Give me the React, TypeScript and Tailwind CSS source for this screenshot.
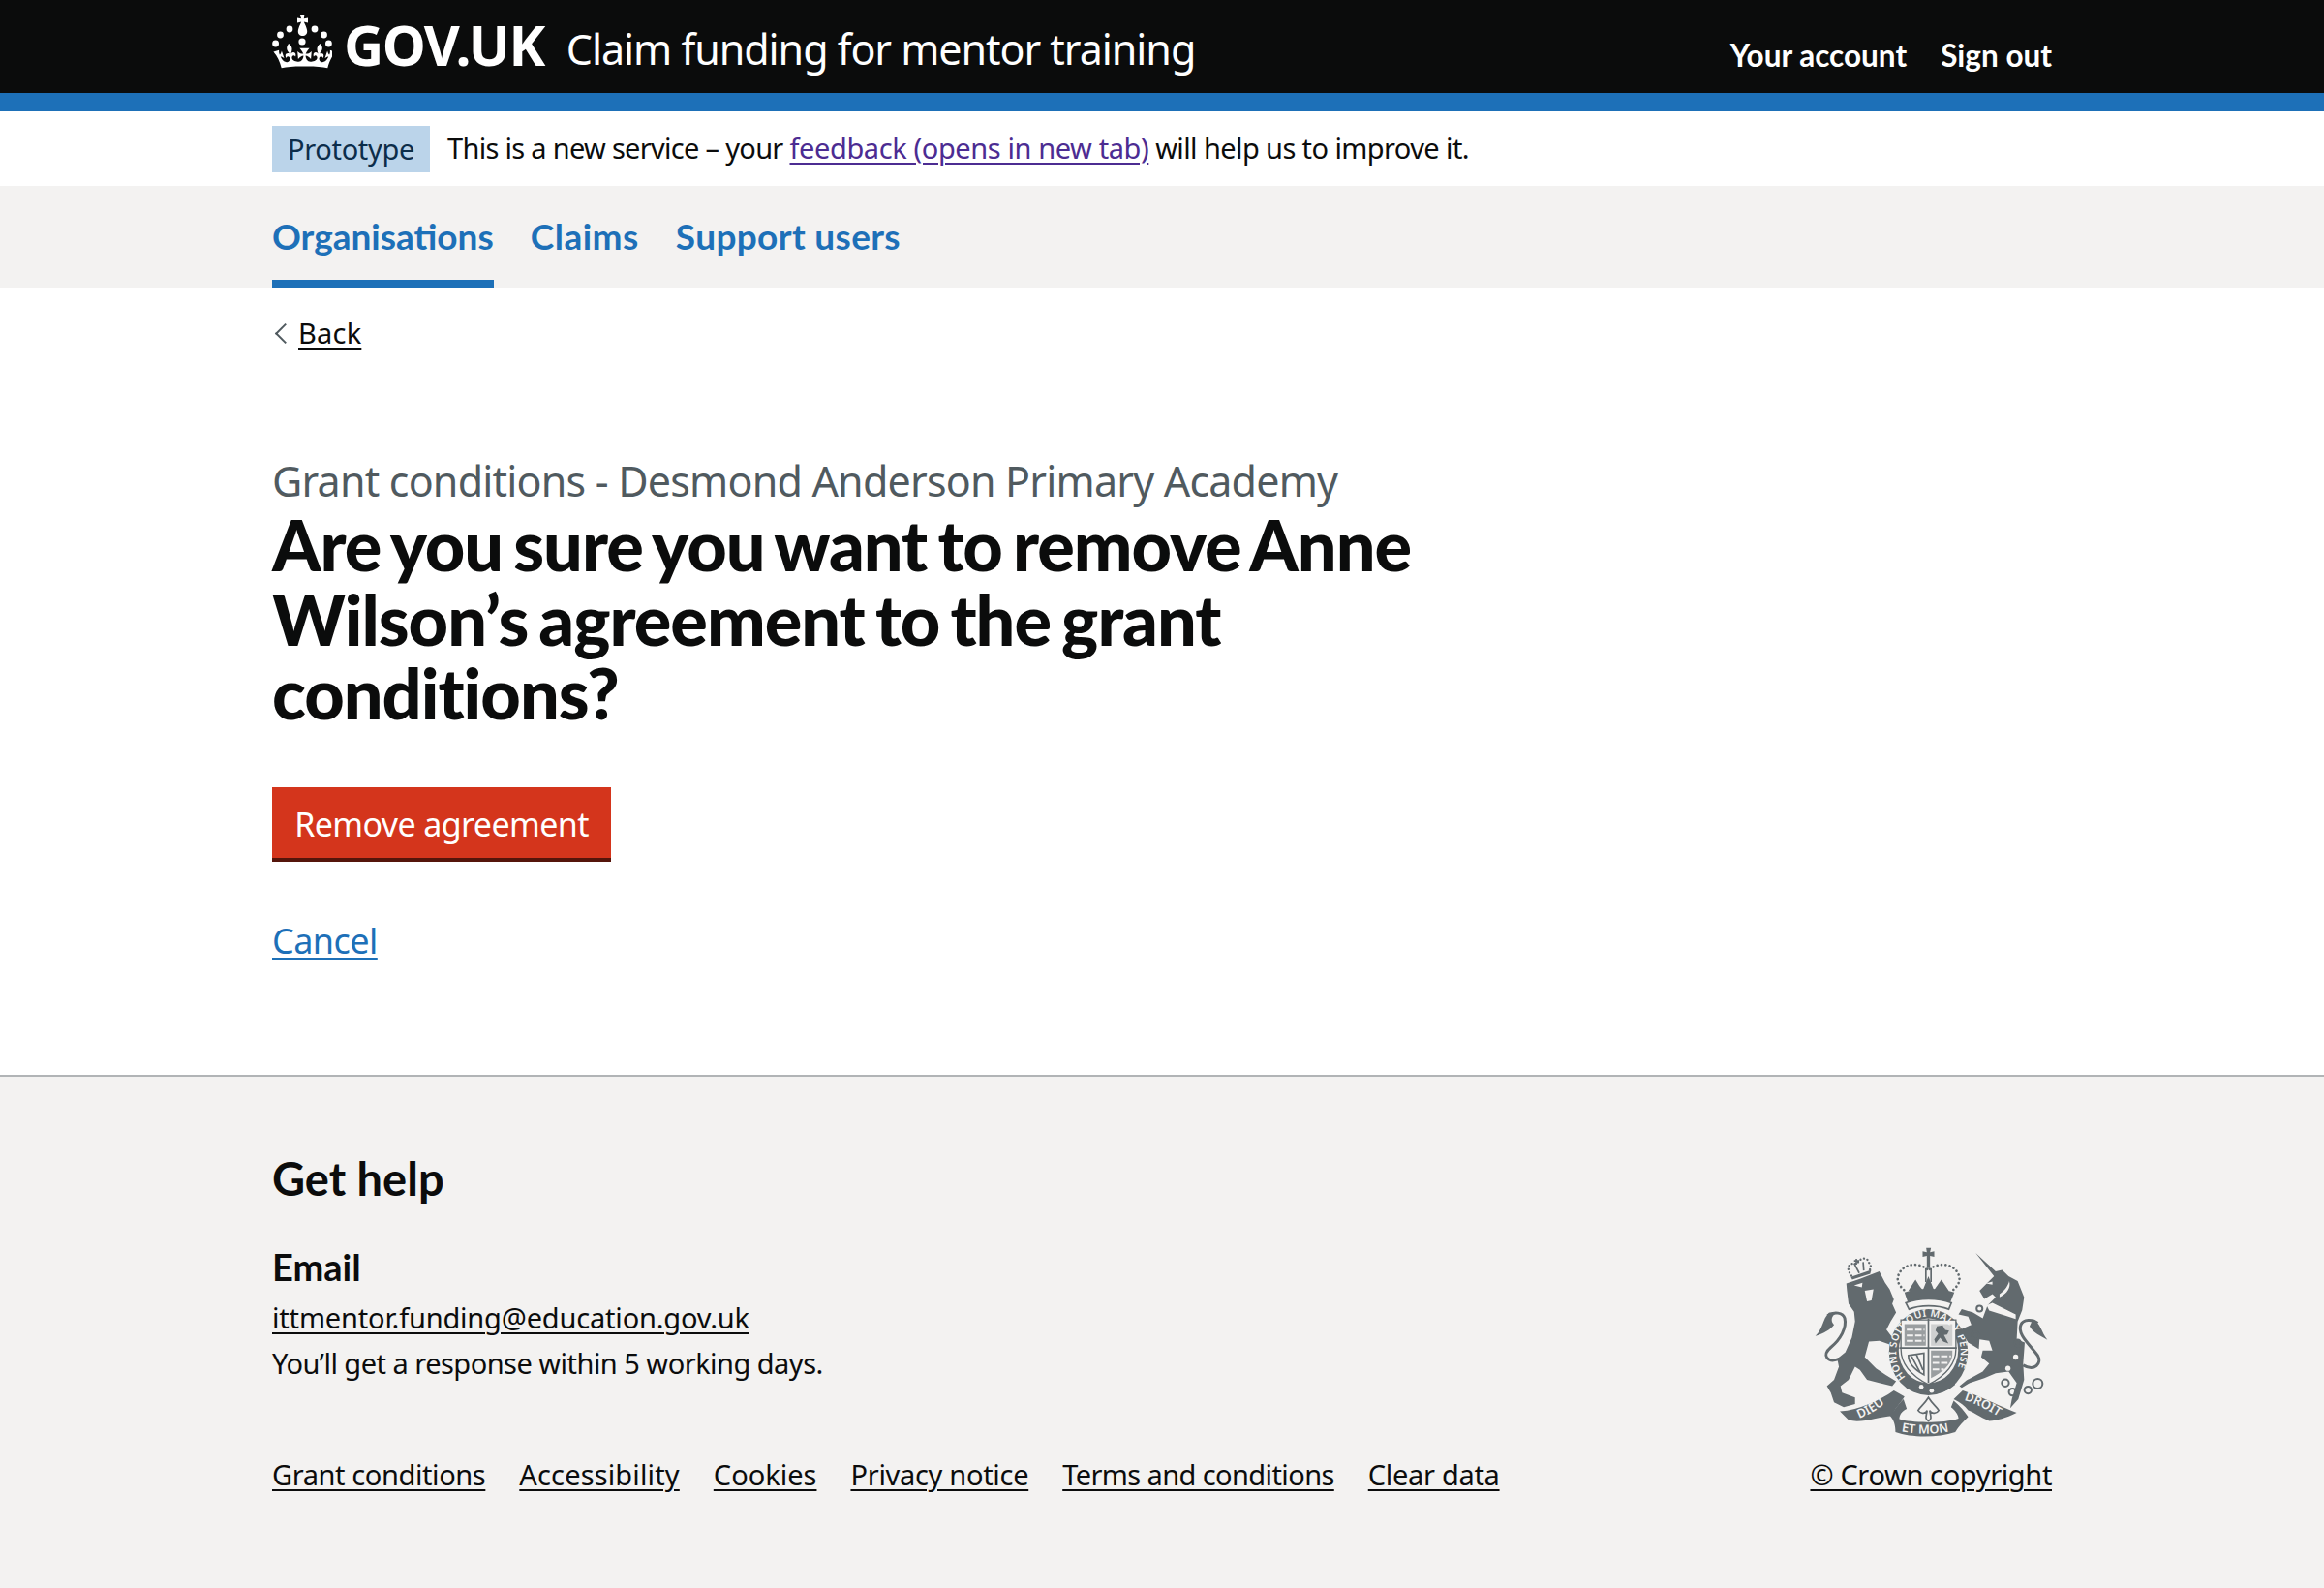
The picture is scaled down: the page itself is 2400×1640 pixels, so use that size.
const font = { fontFamily: '"Noto Sans", sans-serif' };
const bold = { fontFamily: 'Lato, sans-serif' };

function Crown() {
  return (
    <svg viewBox="0 0 62 58" className="h-[58px] w-[62px] shrink-0" fill="#fff" aria-hidden="true">
      <path d="M28.5 1h5l-.7 4.200 4.200-.8v5l-4.200-.8 1 2.200c1.600 3.200 2.400 6 2.400 7.600 0 2.800-2.200 4.600-4.700 4.600s-4.700-1.800-4.700-4.600c0-1.600.8-4.400 2.400-7.600l1-2.200-4.200.8v-5l4.200.8z" />
      <circle cx="18" cy="16" r="3.4" />
      <circle cx="44" cy="16" r="3.4" />
      <circle cx="8.5" cy="22" r="3.4" />
      <circle cx="53.5" cy="22" r="3.4" />
      <circle cx="3.6" cy="31" r="3.4" />
      <circle cx="58.4" cy="31" r="3.4" />
      <circle cx="31" cy="29" r="3.6" />
      <path d="M31 54.500c-9.200 0-15.800.6-21.300 1.700C8 49.500 5.400 44 1.400 39.500l5.800-1.800c-.3 2.300 0 3.600.7 4.900.8-.8 1.500-2.200 2-4.200l2.600 7.800c-1.300-1-2.400-1.600-3.700-1.600 2.200 4.700 5 6 6.800 5.600 2.100-.4 3.100-2.300 2.800-4-.5-2.300-2.900-3-4-.3-2.200-4.400 1.500-5.700 3.800-4.400-3.600-3.600-4-6.800-1.100-10.500 4.100 3 4.100 6.200 2.300 10.400 2.400-2.700 6-1.300 4.700 3.100-1.700-2.600-4-1-3.600 1.600.3 2.100 3.200 3.900 6.800 3.600 3.300-.3 5-3 5.100-6.300-1.300-.2-3.600.9-5.500 3.700l-.7-8.200c2 2.200 4 2.700 6.100 2.700-.7-2.200-3.900-5.800-3.900-5.800h10.200s-3.200 3.600-3.900 5.800c2.100 0 4.100-.5 6.100-2.700l-.7 8.200c-1.900-2.800-4.200-3.900-5.500-3.700.1 3.300 1.800 6 5.100 6.300 3.600.3 6.500-1.500 6.800-3.600.4-2.600-1.900-4.200-3.600-1.600-1.300-4.400 2.300-5.800 4.700-3.100-1.800-4.200-1.800-7.400 2.300-10.400 2.900 3.700 2.500 6.900-1.100 10.500 2.300-1.300 6 0 3.800 4.400-1.100-2.700-3.500-2-4 .3-.3 1.700.7 3.600 2.800 4 1.800.4 4.600-.9 6.800-5.600-1.300 0-2.400.6-3.700 1.600l2.600-7.800c.5 2 1.200 3.400 2 4.200.7-1.300 1-2.600.7-4.900l5.800 1.800c-4 4.500-6.600 10-8.300 16.700-5.500-1.100-12.100-1.700-21.300-1.700z" />
    </svg>
  );
}

function RoyalArms() {
  const grey = "#626a6e";
  const bg = "#f3f2f1";
  return (
    <svg viewBox="100 60 722 590" className="h-[197px] w-[241px]" aria-hidden="true">
      {/* lion */}
      <path fill={grey} d="M198 172 240 158 300 135 318 170 332 190 345 222 340 235 352 262 335 290 322 315 345 345 362 385 350 395 330 360 300 350 268 352 255 400 290 435 320 455 352 475 340 490 300 480 262 470 240 440 225 430 205 470 180 490 185 510 225 525 225 545 190 555 160 540 150 510 138 490 160 470 175 430 170 405 195 385 215 340 225 290 222 260 205 235 200 195Z" />
      <path fill="none" stroke={grey} strokeWidth="9" d="M178 405C140 420 120 395 150 370 180 345 200 310 193 280 188 262 160 258 140 272" />
      <path fill={grey} d="M145 262C122 285 128 310 102 335 125 328 150 315 160 300 150 290 150 275 165 265Z" />
      <path fill={bg} d="M222 178 248 170 246 184ZM255 195 282 190 276 225 262 228Z" />
      {/* lion crown */}
      <path fill={grey} d="M212 152 275 130 272 142 216 160Z" />
      <path fill="none" stroke={grey} strokeWidth="7" strokeLinecap="round" strokeDasharray="0.1 11" d="M214 148C195 125 205 105 232 112 240 90 265 90 268 108 278 118 272 130 268 132" />
      <path fill="none" stroke={grey} strokeWidth="5" d="M222 110 238 140M250 106 252 132M229 96V114M222 102H238" />
      {/* crown */}
      <path fill={grey} d="M445 62H460L457 76 470 73V90L457 87V125H447V87L434 90V73L447 76Z" />
      <path fill="none" stroke={grey} strokeWidth="5" d="M444 125V168M460 125V168" />
      <path fill="none" stroke={grey} strokeWidth="8" strokeLinecap="round" strokeDasharray="0.1 13" d="M448 128C420 105 370 110 358 150 352 175 375 190 385 200M456 128C485 105 535 110 547 150 553 175 530 190 520 200" />
      <path fill={grey} d="M378 200C420 185 485 185 532 200L520 230C480 218 425 218 388 230Z" />
      <path fill={grey} d="M412 160 424 180 436 195H390ZM452 150 470 195H434ZM492 160 515 195H468Z" />
      <path fill={bg} stroke={grey} strokeWidth="5" d="M382 232C425 216 480 216 523 232L515 252C480 238 425 238 392 252Z" />
      {/* garter and shield */}
      <ellipse cx="452" cy="385" rx="122" ry="133" fill={grey} />
      <ellipse cx="452" cy="380" rx="92" ry="100" fill={bg} />
      <path fill={bg} stroke={grey} strokeWidth="4" d="M367 285H537V375C537 425 500 460 452 485 404 460 367 425 367 375Z" />
      <path fill={grey} opacity="0.62" d="M378 298H444V365H378ZM460 380H526V395C522 425 495 448 460 465Z" />
      <path fill={grey} opacity="0.25" d="M460 298H526V365H460Z" />
      <path fill={grey} d="M478 305 496 302 504 316 516 318 510 330 500 332 514 358 498 352 488 340 474 358 470 345 482 328 474 318Z" />
      <path fill="none" stroke={bg} strokeWidth="6" strokeDasharray="20 6" d="M385 315H440M385 333H440M385 350H440M465 398H522M465 418H515M465 438H500" />
      <path fill="none" stroke={grey} strokeWidth="5" d="M390 395 438 388V455C410 440 390 420 390 395ZM400 398 425 445M415 392 435 440" />
      <path fill="none" stroke={grey} strokeWidth="5" d="M452 280V480M362 372H540" />
      <path id="g1" fill="none" d="M381 462A100 110 0 1 1 523 462" />
      <text fontFamily='"Noto Sans", sans-serif' fontSize="31" fontWeight="600" fill={bg}>
        <textPath href="#g1" textLength="462" lengthAdjust="spacing">HONI SOIT QUI MAL Y PENSE</textPath>
      </text>
      <path fill={grey} d="M385 465C425 490 480 490 525 465L535 485C490 525 415 525 375 485Z" />
      <circle cx="430" cy="492" r="7" fill={bg} />
      <circle cx="462" cy="504" r="7" fill={bg} />
      {/* unicorn */}
      <path fill={grey} d="M598 78 660 135 680 130 700 150 728 165 748 215 742 255 728 290 725 345 750 355 745 420 748 470 730 530 705 558 710 530 725 480 700 445 660 450 625 465 580 480 555 495 548 490 570 472 620 445 640 420 615 400 620 380 650 380 640 350 610 345 608 375 575 355 550 315 585 300 575 275 545 268 555 252 590 262 620 280 635 240 660 215 650 205 625 220 610 195 640 165 655 150Z" />
      <path fill={bg} d="M632 240 650 232 722 268 722 282 690 272 640 256ZM630 172 650 166 650 176 ZM672 205C690 195 700 175 702 165 708 185 695 205 672 215Z" />
      <circle cx="722" cy="400" r="8" fill={bg} />
      <circle cx="698" cy="435" r="8" fill={bg} />
      <g fill="none" stroke={grey} strokeWidth="6">
        <circle cx="690" cy="480" r="11" />
        <circle cx="712" cy="508" r="11" />
        <circle cx="760" cy="502" r="11" />
        <circle cx="790" cy="482" r="15" />
        <circle cx="610" cy="250" r="9" />
        <circle cx="598" cy="332" r="11" />
        <circle cx="728" cy="356" r="10" />
        <path strokeWidth="9" d="M745 425C780 445 805 420 790 395 770 365 725 330 738 300 745 282 775 282 790 295" />
      </g>
      <path fill={grey} d="M775 282C800 296 800 320 820 347 800 335 775 325 765 305Z" />
      {/* motto */}
      <path fill={grey} d="M178 568C240 562 300 535 345 503L378 522C365 545 345 560 340 582 295 585 245 606 205 595Z" />
      <path fill={grey} d="M332 580C345 570 355 548 375 530L385 560C368 568 362 580 362 592 400 605 500 605 545 590 545 582 540 570 522 555L530 535C548 550 565 570 575 585 560 600 545 615 535 632 480 650 400 650 350 632 350 610 345 595 332 580Z" />
      <path fill={grey} d="M530 530 558 503C610 520 670 550 725 572 690 590 665 595 640 598 610 585 590 570 575 565 565 550 550 540 530 530Z" />
      <path id="m2" fill="none" d="M238 590C270 578 305 555 335 530" />
      <path id="m3" fill="none" d="M368 630C420 640 490 640 538 624" />
      <path id="m4" fill="none" d="M562 533C600 545 640 565 680 592" />
      <g fontFamily='"Noto Sans", sans-serif' fontSize="38" fontWeight="600" fill={bg}>
        <text><textPath href="#m2">DIEU</textPath></text>
        <text><textPath href="#m3">ET MON</textPath></text>
        <text><textPath href="#m4">DROIT</textPath></text>
      </g>
      <path fill="none" stroke={grey} strokeWidth="5" d="M452 525C440 545 425 555 420 565 430 580 445 572 448 565 445 585 440 590 452 598 464 590 459 585 456 565 459 572 474 580 484 565 479 555 464 545 452 525Z" />
    </svg>
  );
}

const footerLinks = [
  { label: "Grant conditions", className: "tracking-[-0.4px]" },
  { label: "Accessibility", className: "tracking-[0.15px]" },
  { label: "Cookies", className: "tracking-[0px]" },
  { label: "Privacy notice", className: "tracking-[-0.3px]" },
  { label: "Terms and conditions", className: "tracking-[-0.6px]" },
  { label: "Clear data", className: "tracking-[-0.3px]" },
];

export default function App() {
  return (
    <div className="min-h-[1640px] bg-white text-[#0b0c0c]" style={font}>
      <header className="h-[115px] border-b-[19px] border-[#1d70b8] bg-[#0b0c0c] text-white">
        <div className="mx-auto flex h-[96px] w-[1838px] items-start justify-between">
          <div className="flex items-start pt-[14px]">
            <Crown />
            <span className="mt-[3px] ml-[12px] text-[57px] leading-[58px] font-bold tracking-[-1.5px]">GOV.UK</span>
            <span className="mt-[3px] ml-[23px] pt-[5px] text-[43px] leading-[58px] tracking-[-1.05px]">Claim funding for mentor training</span>
          </div>
          <nav className="flex gap-[35px] pt-[38px] text-[31.5px] leading-[38px] font-bold" style={bold}>
            <a>Your account</a>
            <a>Sign out</a>
          </nav>
        </div>
      </header>

      <div className="mx-auto flex h-[77px] w-[1838px] items-center pb-[2px] text-[29px] leading-[38px]">
        <strong className="mr-[18px] -mb-[2px] flex h-[48px] w-[163px] items-center justify-center bg-[#bbd4ea] font-normal tracking-[-0.35px] text-[#0c2d4a]">Prototype</strong>
        <p className="tracking-[-0.7px]">
          This is a new service – your{" "}
          <a className="tracking-[-0.4px] text-[#4c2c92] underline decoration-[2px] underline-offset-[4px]">feedback (opens in new tab)</a>{" "}
          <span className="tracking-[-0.6px]">will help us to improve it.</span>
        </p>
      </div>

      <nav className="h-[105px] bg-[#f3f2f1]">
        <div className="mx-auto flex h-full w-[1838px] gap-[38px] text-[37px] leading-[44px] font-bold text-[#1d70b8]" style={bold}>
          <a className="h-full border-b-[8px] border-[#1d70b8] pt-[30px]">Organisations</a>
          <a className="pt-[30px] tracking-[0.5px]">Claims</a>
          <a className="pt-[30px] tracking-[0.35px]">Support users</a>
        </div>
      </nav>

      <main className="mx-auto w-[1838px] pt-[28px] pb-[119px]">
        <a className="flex items-center text-[29px] leading-[38px] tracking-[0.2px]">
          <span className="mr-[6px] ml-[6px] h-[15px] w-[15px] rotate-45 border-b-[2px] border-l-[2px] border-[#505a5f]" />
          <span className="underline decoration-[2px] underline-offset-[4px]">Back</span>
        </a>
        <p className="mt-[112px] text-[43px] leading-[44px] tracking-[-0.8px] text-[#505a5f]">Grant conditions - Desmond Anderson Primary Academy</p>
        <h1 className="mt-[5px] w-[1225px] text-[72px] leading-[76.5px] font-black tracking-[-1px] [word-spacing:-5px]" style={bold}>
          Are you sure you want to remove Anne Wilson’s agreement to the grant conditions?
        </h1>
        <button className="mt-[59px] block h-[77px] w-[350px] bg-[#d4351c] text-[34px] tracking-[-0.6px] text-white shadow-[inset_0_-4px_0_#55150b]">
          Remove agreement
        </button>
        <a className="mt-[63px] block text-[36px] leading-[38px] tracking-[-0.55px] text-[#1d70b8] underline decoration-[2px] underline-offset-[4px]">Cancel</a>
      </main>

      <footer className="h-[530px] border-t-[2px] border-[#b1b4b6] bg-[#f3f2f1]">
        <div className="mx-auto flex w-[1838px] items-end justify-between pt-[82px]">
          <div>
            <h2 className="text-[47px] leading-[46px] font-bold" style={bold}>Get help</h2>
            <h3 className="mt-[49px] text-[38px] leading-[38px] font-bold" style={bold}>Email</h3>
            <a className="mt-[15px] block text-[29px] leading-[38px] tracking-[-0.18px] underline decoration-[2px] underline-offset-[4px]">ittmentor.funding@education.gov.uk</a>
            <p className="mt-[9px] text-[29px] leading-[38px] tracking-[-0.52px]">You’ll get a response within 5 working days.</p>
            <ul className="mt-[78px] flex gap-[35px] text-[29px] leading-[36px]">
              {footerLinks.map((l) => (
                <li key={l.label}>
                  <a className={`${l.className} underline decoration-[2px] underline-offset-[4px]`}>{l.label}</a>
                </li>
              ))}
            </ul>
          </div>
          <div className="flex flex-col items-center">
            <RoyalArms />
            <a className="mt-[20px] text-[29px] leading-[36px] tracking-[-0.37px] underline decoration-[2px] underline-offset-[4px]">© Crown copyright</a>
          </div>
        </div>
      </footer>
    </div>
  );
}
